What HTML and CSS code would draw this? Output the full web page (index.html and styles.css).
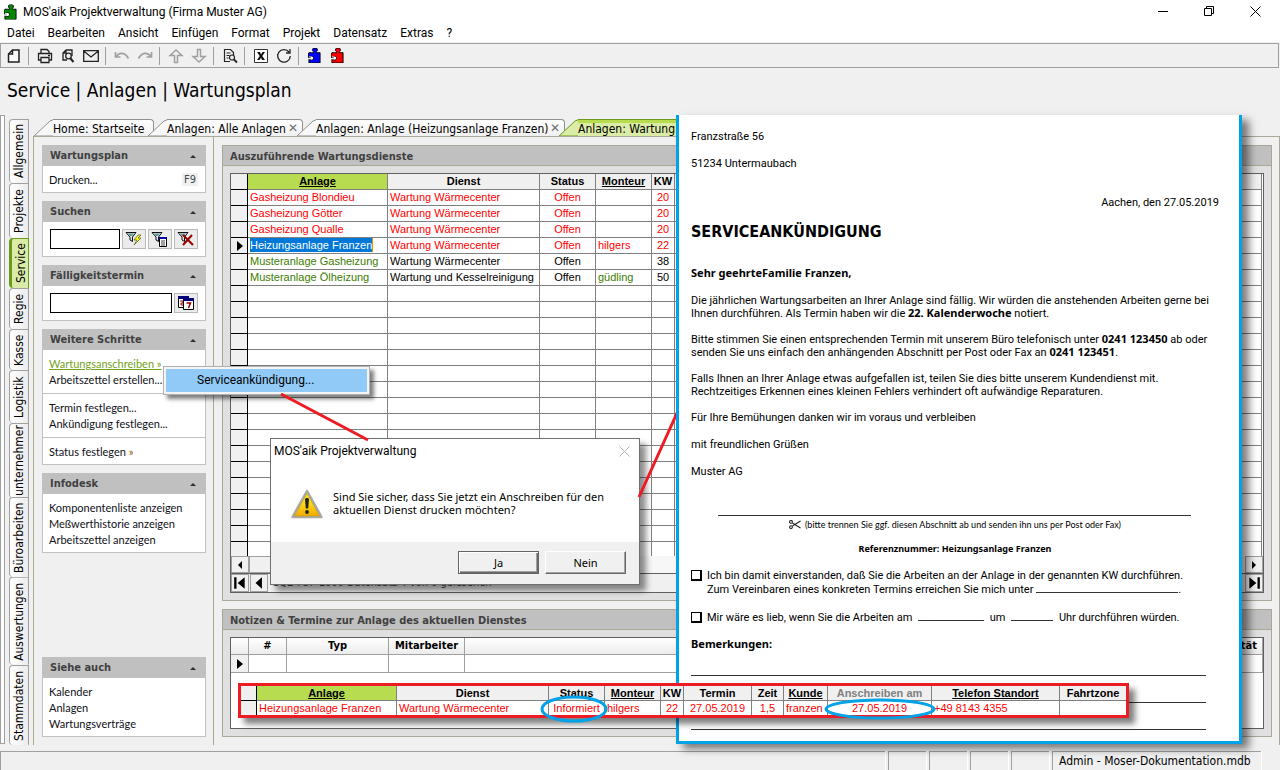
FILE: index.html
```html
<!DOCTYPE html>
<html lang="de">
<head>
<meta charset="utf-8">
<title>MOS'aik Projektverwaltung (Firma Muster AG)</title>
<link rel="stylesheet" href="styles.css">
</head>
<body>
<svg class="defs" aria-hidden="true">
  <symbol id="puzzle" viewBox="0 0 14 16">
    <path d="M4 5h2V4L5 3V1l1-1h3l1 1v2L9 4v1h4v11H1v-4h2v1h2v-1l1-1v-1L5 9H3v1H0V7l1-2z" stroke="#000" stroke-width="1" stroke-linejoin="round"/>
    <path d="M1 9h3l1 1v2H1v-1h2v-1H1z" fill="#fff"/>
  </symbol>
  <symbol id="funnel" viewBox="0 0 18 16">
    <path d="M1 1.500h10L7.500 6v4.500L5 9V6z" fill="#dfe9e9" stroke="#111"/>
    <path d="M3 2.500h6L7 5H5z" fill="#5b9b9b"/>
  </symbol>
</svg>
<div class="app">
  <header class="titlebar">
    <svg class="logo" viewBox="0 0 14 16" fill="#008a00"><use href="#puzzle"/></svg>
    <span class="apptitle">MOS'aik Projektverwaltung (Firma Muster AG)</span>
    <div class="winbtns">
      <button aria-label="Minimieren"><svg viewBox="0 0 11 11"><path d="M0 5.500h10" stroke="#000"/></svg></button>
      <button aria-label="Wiederherstellen"><svg viewBox="0 0 11 11" fill="none" stroke="#000"><path d="M.5 2.500h7v7h-7zM2.500 2.500v-2h7v7h-2"/></svg></button>
      <button aria-label="Schließen"><svg viewBox="0 0 11 11"><path d="M.5.5l10 10M10.500.5l-10 10" stroke="#000"/></svg></button>
    </div>
  </header>
  <nav class="menubar">
    <button>Datei</button><button>Bearbeiten</button><button>Ansicht</button><button>Einfügen</button><button>Format</button><button>Projekt</button><button>Datensatz</button><button>Extras</button><button>?</button>
  </nav>
  <div class="toolbar">
    <button aria-label="Neu"><svg viewBox="0 0 16 16" fill="none" stroke="#222" stroke-width="1.500"><path d="M6.500 2H13v12H2.500V6z" fill="#fff"/><path d="M2.500 6h4V2"/></svg></button>
    <i class="sep"></i>
    <button aria-label="Drucken"><svg viewBox="0 0 16 16" fill="none" stroke="#222" stroke-width="1.300"><path d="M4 5V1.500h6l2 2V5M4 12H1.500V5.500h13V12H12M4 9.500h8v5H4z"/><path d="M11 7.500h2"/></svg></button>
    <button aria-label="Vorschau"><svg viewBox="0 0 16 16" fill="none" stroke="#222" stroke-width="1.300"><path d="M6 2h6v6M6 2L3 5v7h4M6 2v3H3"/><circle cx="8.500" cy="8" r="2.800"/><path d="M10.500 10.500l3 3.500" stroke-width="2"/></svg></button>
    <button aria-label="E-Mail"><svg viewBox="0 0 16 16" fill="none" stroke="#222" stroke-width="1.300"><path d="M.7 2.700h14.600v10.600H.7zM.7 3l7.300 6 7.300-6"/></svg></button>
    <i class="sep"></i>
    <button aria-label="Rückgängig" disabled><svg viewBox="0 0 16 16" fill="none" stroke="#a0a0a0" stroke-width="1.700"><path d="M1.500 4v5h5M2 9c3-5 9-5 12.500 1.500"/></svg></button>
    <button aria-label="Wiederholen" disabled><svg viewBox="0 0 16 16" fill="none" stroke="#a0a0a0" stroke-width="1.700"><path d="M14.500 4v5h-5M14 9C11 4 5 4 1.500 10.500"/></svg></button>
    <i class="sep"></i>
    <button aria-label="Nach oben" disabled><svg viewBox="0 0 16 16" fill="none" stroke="#a0a0a0" stroke-width="1.500"><path d="M8 2L2 7.500h4.500V14.500h3V7.500H14z"/></svg></button>
    <button aria-label="Nach unten" disabled><svg viewBox="0 0 16 16" fill="none" stroke="#a0a0a0" stroke-width="1.500"><path d="M8 14L2 8.500h4.500V1.500h3v7H14z"/></svg></button>
    <i class="sep"></i>
    <button aria-label="Suchen"><svg viewBox="0 0 16 16" fill="none" stroke="#222" stroke-width="1.200"><path d="M8 13.500H2.500v-12h6l3 3V7M4.500 5h4M4.500 7.500h3M4.500 10h2"/><circle cx="10" cy="9.500" r="2.500"/><path d="M12 11.500l3 3" stroke-width="1.800"/></svg></button>
    <i class="sep"></i>
    <button aria-label="Excel"><svg viewBox="0 0 16 16"><path d="M1.500 1.500h13v13h-13z" fill="#fff" stroke="#333"/><path d="M4 4h3l1 2.500L9.500 4H12L9.300 8l2.700 4H9L8 9.800 6.500 12H4l2.700-4z" fill="#111"/></svg></button>
    <button aria-label="Aktualisieren"><svg viewBox="0 0 16 16" fill="none" stroke="#222" stroke-width="1.300"><path d="M13 4A6.300 6.300 0 1 0 14.300 8M14 1v4h-4"/></svg></button>
    <i class="sep"></i>
    <button aria-label="Modul blau"><svg class="piece" viewBox="0 0 14 16" fill="#0000ff"><use href="#puzzle"/></svg></button>
    <button aria-label="Modul rot"><svg class="piece" viewBox="0 0 14 16" fill="#ff0000"><use href="#puzzle"/></svg></button>
  </div>
  <h1 class="crumb">Service | Anlagen | Wartungsplan</h1>

  <main class="main">
    <div class="splitter"></div>
    <nav class="vtabs">
      <button class="v64">Allgemein</button><button class="v55">Projekte</button><button class="v50 on">Service</button><button class="v41">Regie</button><button class="v41">Kasse</button><button class="v53">Logistik</button><button class="v74">unternehmer</button><button class="v80">Büroarbeiten</button><button class="v88">Auswertungen</button><button class="v80">Stammdaten</button>
    </nav>
    <div class="content">
      <div class="tabs">
        <button class="tab home"><svg viewBox="0 0 19 17"><path d="M0 17L16 2l4-1.500V17z"/></svg><span>Home: Startseite</span></button>
        <button class="tab alle"><svg viewBox="0 0 19 17"><path d="M0 17L16 2l4-1.500V17z"/></svg><span>Anlagen: Alle Anlagen<b class="x">✕</b></span></button>
        <button class="tab one"><svg viewBox="0 0 19 17"><path d="M0 17L16 2l4-1.500V17z"/></svg><span>Anlagen: Anlage (Heizungsanlage Franzen)<b class="x">✕</b></span></button>
        <button class="tab plan on"><svg viewBox="0 0 19 17"><path d="M0 17L16 2l4-1.500V17z"/></svg><span>Anlagen: Wartung</span></button>
      </div>
      <div class="frame">
        <aside class="side">
          <section class="box"><h2>Wartungsplan<i class="up"></i></h2>
            <div class="links"><a href="#">Drucken...</a><kbd>F9</kbd></div></section>
          <section class="box"><h2>Suchen<i class="up"></i></h2>
            <div class="search"><input type="text" aria-label="Suchen">
              <button aria-label="Filtern"><svg viewBox="0 0 18 16"><use href="#funnel"/><path d="M13 4l-4 5h3l-3 5 7-7h-3l3-3z" fill="#ff0" stroke="#553" stroke-width=".7"/></svg></button>
              <button aria-label="Filterliste"><svg viewBox="0 0 18 16"><use href="#funnel"/><path d="M8.500 6.500h7v9h-7z" fill="#fff" stroke="#000"/><path d="M8 6h8v2H8z" fill="#00a"/><path d="M10 10h4M10 12h4M10 14h4" stroke="#444"/></svg></button>
              <button aria-label="Filter löschen"><svg viewBox="0 0 18 16"><use href="#funnel"/><path d="M6 4l10 10M15 4L6 14" stroke="#900" stroke-width="2"/></svg></button>
            </div></section>
          <section class="box"><h2>Fälligkeitstermin<i class="up"></i></h2>
            <div class="search"><input type="text" aria-label="Fälligkeitstermin">
              <button aria-label="Kalender"><svg viewBox="0 0 18 16"><path d="M1.500 1.500h10v11h-10z" fill="#fff" stroke="#000"/><path d="M1 1h11v3H1z" fill="#00007b"/><path d="M3 6h3v2H4v2h2" fill="none" stroke="#900"/><path d="M6.500 3.500h10v11h-10z" fill="#fff" stroke="#000"/><path d="M6 3h11v3H6z" fill="#00007b"/><path d="M9.500 8h4l-2 5" fill="none" stroke="#900" stroke-width="1.500"/></svg></button>
            </div></section>
          <section class="box"><h2>Weitere Schritte<i class="up"></i></h2>
            <div class="links"><a href="#" class="hot">Wartungsanschreiben »</a><a href="#">Arbeitszettel erstellen...</a></div>
            <div class="links"><a href="#">Termin festlegen...</a><a href="#">Ankündigung festlegen...</a></div>
            <div class="links"><a href="#">Status festlegen <span class="arr">»</span></a></div></section>
          <section class="box"><h2>Infodesk<i class="up"></i></h2>
            <div class="links"><a href="#">Komponentenliste anzeigen</a><a href="#">Meßwerthistorie anzeigen</a><a href="#">Arbeitszettel anzeigen</a></div></section>
          <section class="box last"><h2>Siehe auch<i class="up"></i></h2>
            <div class="links"><a href="#">Kalender</a><a href="#">Anlagen</a><a href="#">Wartungsverträge</a></div></section>
        </aside>
        <div class="work">
          <section class="panel grow">
            <h2>Auszuführende Wartungsdienste</h2>
            <div class="gridbox">
              <div class="gridview">
                <table class="grid services">
                  <colgroup><col class="c17"><col class="c140"><col class="c152"><col class="c56"><col class="c56"><col class="c23"><col></colgroup>
                  <thead><tr><th></th><th class="key"><u>Anlage</u></th><th>Dienst</th><th>Status</th><th><u>Monteur</u></th><th>KW</th><th></th></tr></thead>
                  <tbody id="services">
                    <tr class="red"><td></td><td>Gasheizung Blondieu</td><td>Wartung Wärmecenter</td><td class="mid">Offen</td><td></td><td class="mid">20</td><td></td></tr>
                    <tr class="red"><td></td><td>Gasheizung Götter</td><td>Wartung Wärmecenter</td><td class="mid">Offen</td><td></td><td class="mid">20</td><td></td></tr>
                    <tr class="red"><td></td><td>Gasheizung Qualle</td><td>Wartung Wärmecenter</td><td class="mid">Offen</td><td></td><td class="mid">20</td><td></td></tr>
                    <tr class="red"><td><i class="cur"></i></td><td><mark>Heizungsanlage Franzen</mark></td><td>Wartung Wärmecenter</td><td class="mid">Offen</td><td>hilgers</td><td class="mid">22</td><td></td></tr>
                    <tr><td></td><td class="green">Musteranlage Gasheizung</td><td>Wartung Wärmecenter</td><td class="mid">Offen</td><td></td><td class="mid">38</td><td></td></tr>
                    <tr><td></td><td class="green">Musteranlage Ölheizung</td><td>Wartung und Kesselreinigung</td><td class="mid">Offen</td><td class="green">güdling</td><td class="mid">50</td><td></td></tr>
                  </tbody>
                </table>
              </div>
              <div class="hscroll"><button aria-label="Links"><i class="tri l"></i></button><div class="thumb"></div><div class="track"></div><button aria-label="Rechts"><i class="tri r"></i></button></div>
              <div class="recnav">
                <button aria-label="Erster"><svg viewBox="0 0 12 12"><path d="M1 1h2v10H1zM10 1v10L4 6z"/></svg></button>
                <button aria-label="Vorheriger"><svg viewBox="0 0 12 12"><path d="M8.500 1v10L3 6z"/></svg></button>
                <span>SQL TOP 1000 Datensatz 4 von 6 gelesehen</span>
                <button aria-label="Letzter"><svg viewBox="0 0 12 12"><path d="M9 1h2v10H9zM2 1v10l6-5z"/></svg></button>
              </div>
            </div>
          </section>
          <section class="panel">
            <h2>Notizen &amp; Termine zur Anlage des aktuellen Dienstes</h2>
            <div class="gridbox notesbox">
              <table class="grid notes">
                <colgroup><col class="c18"><col class="c38"><col class="c102"><col class="c76"><col></colgroup>
                <thead><tr><th></th><th>#</th><th>Typ</th><th>Mitarbeiter</th><th class="end">Priorität</th></tr></thead>
                <tbody><tr><td><i class="cur"></i></td><td></td><td></td><td></td><td></td></tr></tbody>
              </table>
            </div>
          </section>
        </div>
      </div>
    </div>
  </main>
  <footer class="status"><span class="wide"></span><span></span><span></span><span></span><span></span><span class="db">Admin - Moser-Dokumentation.mdb</span></footer>

  <div class="popup"><button>Serviceankündigung...</button></div>

  <div class="dialog" role="dialog" aria-label="MOS'aik Projektverwaltung">
    <div class="dhead"><span>MOS'aik Projektverwaltung</span><button aria-label="Schließen"><svg viewBox="0 0 11 11"><path d="M.5.5l10 10M10.500.5l-10 10" stroke="#b4b4b4"/></svg></button></div>
    <div class="dbody">
      <svg viewBox="0 0 32 30"><defs><linearGradient id="warn" x1="0" y1="0" x2="0" y2="1"><stop offset="0" stop-color="#f6ea1c"/><stop offset=".5" stop-color="#f9d714"/><stop offset="1" stop-color="#f2a900"/></linearGradient></defs>
        <path d="M16 2L30.500 28h-29z" fill="#ddd" stroke="#a8a8a8" stroke-width="2.500" stroke-linejoin="round"/>
        <path d="M16 4.500L28.500 27h-25z" fill="url(#warn)" stroke="#c99a00" stroke-width=".6"/>
        <path d="M14 10.500c0-2 4-2 4 0l-.8 9h-2.400z" fill="#222"/><circle cx="16" cy="23" r="1.900" fill="#222"/></svg>
      <p>Sind Sie sicher, dass Sie jetzt ein Anschreiben für den<br>aktuellen Dienst drucken möchten?</p>
    </div>
    <div class="dfoot"><button class="def">Ja</button><button>Nein</button></div>
  </div>

  <svg class="ink" viewBox="0 0 1280 770"><path d="M281 394L368 440M639 497L677 413" stroke="#ed1c24" stroke-width="3" fill="none"/></svg>

  <article class="letter">
    <p>Franzstraße 56</p>
    <p class="city">51234 Untermaubach</p>
    <p class="date">Aachen, den 27.05.2019</p>
    <h3>SERVICEANKÜNDIGUNG</h3>
    <p class="dear"><b>Sehr geehrteFamilie Franzen,</b></p>
    <p class="para first">Die jährlichen Wartungsarbeiten an Ihrer Anlage sind fällig. Wir würden die anstehenden Arbeiten gerne bei<br>Ihnen durchführen. Als Termin haben wir die <b>22. Kalenderwoche</b> notiert.</p>
    <p class="para">Bitte stimmen Sie einen entsprechenden Termin mit unserem Büro telefonisch unter <b>0241 123450</b> ab oder<br>senden Sie uns einfach den anhängenden Abschnitt per Post oder Fax an <b>0241 123451</b>.</p>
    <p class="para">Falls Ihnen an Ihrer Anlage etwas aufgefallen ist, teilen Sie dies bitte unserem Kundendienst mit.<br>Rechtzeitiges Erkennen eines kleinen Fehlers verhindert oft aufwändige Reparaturen.</p>
    <p class="para">Für Ihre Bemühungen danken wir im voraus und verbleiben</p>
    <p class="para greet">mit freundlichen Grüßen</p>
    <p class="para greet">Muster AG</p>
    <div class="cut"></div>
    <p class="note"><svg viewBox="0 0 12 9" fill="none" stroke="#222" stroke-width="1.100"><path d="M11.500 1L3.500 6M11.500 8L3.500 3"/><circle cx="2" cy="1.900" r="1.400"/><circle cx="2" cy="7.100" r="1.400"/></svg>(bitte trennen Sie ggf. diesen Abschnitt ab und senden ihn uns per Post oder Fax)</p>
    <p class="ref">Referenznummer: Heizungsanlage Franzen</p>
    <div class="opt"><input type="checkbox" id="ok"><label for="ok">Ich bin damit einverstanden, daß Sie die Arbeiten an der Anlage in der genannten KW durchführen.<br>Zum Vereinbaren eines konkreten Termins erreichen Sie mich unter <i class="blank b142"></i>.</label></div>
    <div class="opt"><input type="checkbox" id="alt"><label for="alt">Mir wäre es lieb, wenn Sie die Arbeiten am <i class="blank b66"></i> um <i class="blank b42"></i> Uhr durchführen würden.</label></div>
    <p class="para"><b>Bemerkungen:</b></p>
    <div class="rule"></div><div class="rule"></div><div class="rule"></div>
  </article>

  <div class="strip">
    <table class="grid">
      <colgroup><col class="c16"><col class="c140"><col class="c152"><col class="c56"><col class="c56"><col class="c23"><col class="c68"><col class="c32"><col class="c44"><col class="c104"><col class="c128"><col class="c66"></colgroup>
      <thead><tr><th></th><th class="key"><u>Anlage</u></th><th>Dienst</th><th>Status</th><th><u>Monteur</u></th><th>KW</th><th>Termin</th><th>Zeit</th><th><u>Kunde</u></th><th class="dim">Anschreiben am</th><th><u>Telefon Standort</u></th><th>Fahrtzone</th></tr></thead>
      <tbody><tr class="red"><td></td><td>Heizungsanlage Franzen</td><td>Wartung Wärmecenter</td><td class="mid">Informiert</td><td>hilgers</td><td class="mid">22</td><td class="mid">27.05.2019</td><td class="mid">1,5</td><td>franzen</td><td class="mid">27.05.2019</td><td>+49 8143 4355</td><td></td></tr></tbody>
    </table>
  </div>
  <svg class="ink" viewBox="0 0 1280 770"><g fill="none" stroke="#00a2e8" stroke-width="3"><ellipse cx="574" cy="709" rx="32" ry="12"/><ellipse cx="880" cy="709" rx="54" ry="9"/></g></svg>
</div>
<script src="rows.js"></script>
</body>
</html>
```
FILE: rows.js
```js
const body = document.getElementById("services");
for (let i = 0; i < 17; i++) {
  const row = body.insertRow();
  for (let c = 0; c < 7; c++) row.insertCell();
}
```
FILE: styles.css
```css
* { box-sizing: border-box; }
:root {
  --bg: #f0f0f0;
  --line: #a0a0a0;
  --olive: #aaa797;
  --tahoma: "DejaVu Sans Condensed", "DejaVu Sans", sans-serif;
}
body { margin: 0; font: 12px/16px Roboto, sans-serif; color: #000; background: var(--bg); }
button { font: inherit; color: inherit; border: 0; background: none; padding: 0; }
h1, h2, h3, p { margin: 0; }
i { font-style: normal; }
.defs { position: absolute; width: 0; height: 0; }
.app { position: relative; display: flex; flex-direction: column; height: 100vh; overflow: hidden; }

.titlebar { display: flex; align-items: center; height: 23px; padding-left: 4px; background: #fff; }
.logo { width: 13px; height: 16px; margin-right: 6px; }
.winbtns { margin-left: auto; display: flex; padding-right: 2px; }
.winbtns button { width: 46px; height: 20px; }
.winbtns svg { width: 11px; height: 11px; display: block; margin: auto; }
.menubar { display: flex; gap: 13px; height: 19px; padding: 1px 0 0 7px; background: #fff; align-items: center; }
.toolbar { display: flex; align-items: center; height: 25px; margin: 1px 1px 0 0; padding-left: 1px; border: 1px solid var(--line); }
.toolbar button { width: 23px; height: 22px; }
.toolbar svg { width: 16px; height: 16px; display: block; margin: auto; }
.toolbar svg.piece { width: 13px; height: 15px; }
.sep { width: 1px; height: 18px; margin: 0 4px 0 3px; background: var(--line); }
.crumb { font: 400 19px/44px var(--tahoma); height: 47px; padding-left: 7px; }

.main { flex: 1; min-height: 0; display: flex; padding-bottom: 6px; margin-bottom: 19px; }
.main, .content, .work { min-width: 0; }
.splitter { width: 5px; margin-bottom: 1px; border: 1px solid var(--line); background: #fff; }
.vtabs { display: flex; flex-direction: column; width: 20px; margin: 4px 0 0 4px; font: 12px/18px var(--tahoma); }
.vtabs button { writing-mode: vertical-rl; transform: rotate(180deg); width: 20px; border: 1px solid var(--line); border-top: 0; border-radius: 0 4px 4px 0; background: linear-gradient(90deg, #ececec, #fff); overflow: hidden; white-space: nowrap; padding: 2px 0; text-align: center; }
.vtabs .on { background: #dbeca6; border-color: #6b9a1c; border-right-width: 3px; }
.v41 { height: 41px; } .v50 { height: 50px; } .v53 { height: 53px; } .v55 { height: 55px; } .v64 { height: 64px; }
.v74 { height: 75px; } .v80 { height: 80px; } .v88 { height: 88px; }
.vtabs .v74 { padding: 0; }

.content { flex: 1; display: flex; flex-direction: column; margin-left: 4px; padding-top: 4px; }
.tabs { display: flex; height: 17px; padding-left: 1px; }
.tab { display: flex; height: 17px; margin-right: -6px; font: 12px/18px var(--tahoma); white-space: nowrap; }
.tab svg { width: 19px; height: 17px; flex: none; fill: #f8f8f8; stroke: #909090; overflow: hidden; }
.tab span { flex: 1; display: flex; justify-content: space-between; text-align: left; border: 1px solid #909090; border-width: 1px 1px 0 0; border-radius: 0 4px 0 0; background: linear-gradient(#fff, #f0f0f0); padding-right: 4px; }
.home { width: 120px; } .alle { width: 155px; } .one { width: 268px; } .plan { width: 180px; }
.tab .x { font: 700 12px/17px "DejaVu Sans", sans-serif; color: #707070; }
.tab.on span { background: linear-gradient(#b8dc50 3px, #dbeca6 3px); border-color: #6b9a1c; }
.tab.on svg { fill: #dbeca6; stroke: #6b9a1c; }
.frame { flex: 1; min-height: 0; display: flex; border: 1px solid var(--olive); border-bottom: 0; }

.side { width: 180px; flex: none; display: flex; flex-direction: column; gap: 8px; padding: 8px 7px 8px 8px; border-right: 1px solid var(--olive); }
.box { background: #fff; border: 1px solid #c0c0c0; border-top: 0; }
.box.last { margin-top: auto; }
.box h2 { display: flex; justify-content: space-between; align-items: center; height: 21px; margin: 0 -1px; padding: 1px 10px 0 8px; background: #c0c0c0; color: #404040; font: 700 11px/20px var(--tahoma); }
.up { width: 0; border: 3px solid transparent; border-top: 0; border-bottom-color: #303030; }
.links { position: relative; display: flex; flex-direction: column; align-items: flex-start; padding: 6px 6px 4px; font: 11px/16px Lato, sans-serif; }
.links + .links { border-top: 1px solid #c0c0c0; margin-top: 1px; }
.links a { color: #101018; text-decoration: none; white-space: nowrap; }
.links a.hot { color: #74a21b; text-decoration: underline; }
.arr { color: #8a5a00; }
kbd { position: absolute; right: 7px; top: 7px; padding: 0 2px; background: var(--bg); color: #3c4c50; font: 11px/13px var(--tahoma); }
.search { display: flex; gap: 2px; padding: 7px; }
.search input { flex: 1; min-width: 0; height: 20px; border: 1px solid #000; background: #fff; }
.search button { width: 24px; height: 20px; background: #ececec; border: 1px solid #b8b8b8; }
.search svg { width: 18px; height: 16px; display: block; margin: auto; }

.work { flex: 1; display: flex; flex-direction: column; gap: 8px; padding: 8px 7px 8px 8px; }
.panel { display: flex; flex-direction: column; min-height: 0; border: 1px solid var(--olive); background: #e0e0e0; }
.panel.grow { flex: 1; }
.panel h2 { height: 20px; flex: none; padding: 1px 0 0 7px; background: #c0c0c0; border-bottom: 1px solid var(--olive); font: 700 11px/19px var(--tahoma); color: #404040; }
.gridbox { flex: 1; min-height: 0; margin: 7px; display: flex; flex-direction: column; border: 1px solid #606060; background: #fff; }
.gridview { flex: 1; min-height: 0; overflow: hidden; padding-right: 1px; }
.notesbox { flex: none; height: 92px; }
.grid { width: 100%; table-layout: fixed; border-collapse: separate; border-spacing: 0; font: 11px/15px "Liberation Sans", Arial, sans-serif; }
.grid th, .grid td { height: 16px; padding: 0 2px; border: solid #808080; border-width: 0 1px 1px 0; overflow: hidden; white-space: nowrap; line-height: 15px; }
.grid td { text-align: left; background: #fff; }
.grid th { font-weight: 700; background: var(--bg); padding: 0; }
.grid th.key { background: #b8dc50; }
.grid th.dim { color: #808080; }
.grid tr > :first-child { background: var(--bg); border-color: #000; }
.grid td.mid { text-align: center; padding: 0; }
.red { color: #ff0000; }
.green { color: #3c7d00; }
mark { background: #0078d7; color: #fff; display: inline-block; height: 14px; line-height: 14px; border-right: 1px solid #f80; }
.cur { display: block; width: 0; margin-left: 4px; border: 5px solid transparent; border-left: 6px solid #000; border-right: 0; }
.grid.notes th { font: 700 11px/16px var(--tahoma); height: 17px; background: linear-gradient(#fff, #ececec); }
.grid.notes th.end { text-align: right; padding-right: 5px; }
.grid.notes td { height: 18px; }
.grid.notes th, .grid.notes td { border-color: var(--line); }
.c16 { width: 16px; } .c17 { width: 17px; } .c18 { width: 18px; } .c23 { width: 23px; } .c32 { width: 32px; } .c38 { width: 38px; } .c44 { width: 44px; }
.c56 { width: 56px; } .c66 { width: 66px; } .c68 { width: 68px; } .c76 { width: 76px; } .c102 { width: 102px; }
.c104 { width: 104px; } .c128 { width: 128px; } .c140 { width: 140px; } .c152 { width: 152px; }

.hscroll { display: flex; height: 18px; background: var(--bg); border-bottom: 1px solid #606060; }
.hscroll button { width: 18px; height: 17px; border: 1px solid #a0a0a0; background: var(--bg); }
.thumb { flex: 3; border: 1px solid #a0a0a0; }
.track { flex: 7; background: #f7f7f7; }
.tri { display: block; width: 0; margin: auto; border: 4px solid transparent; }
.tri.l { border-right-color: #000; border-left: 0; }
.tri.r { border-left-color: #000; border-right: 0; }
.recnav { display: flex; gap: 1px; align-items: center; height: 18px; background: var(--bg); }
.recnav button { width: 18px; height: 18px; border: 1px solid #a0a0a0; }
.recnav svg { width: 14px; height: 14px; display: block; margin: auto; }
.recnav span { flex: 1; padding-left: 4px; font: 11px/20px var(--tahoma); color: #404040; }

.status { position: absolute; left: 0; right: 0; bottom: 0; display: flex; gap: 3px; height: 19px; padding-right: 19px; font: 12px/18px var(--tahoma); }
.status span { width: 38px; border: solid var(--line); border-width: 1px 0 0 1px; box-shadow: 1px 0 #fff; }
.status .wide { flex: 1; }
.status .db { width: auto; min-width: 209px; padding: 0 7px 0 6px; }

.popup { position: absolute; left: 163px; top: 366px; width: 207px; padding: 2px; background: #f4f4f4; border: 1px solid #b0b0b0; box-shadow: 4px 4px 4px rgba(0, 0, 0, .5); }
.popup button { width: 100%; height: 23px; padding-left: 31px; background: #91c9f7; text-align: left; font: 12px/23px Roboto, sans-serif; }

.dialog { position: absolute; left: 270px; top: 438px; width: 370px; border: 1px solid #707070; background: #fff; box-shadow: 6px 6px 6px rgba(0, 0, 0, .45); }
.dhead { display: flex; justify-content: space-between; align-items: center; height: 24px; padding: 0 9px 0 3px; }
.dhead svg { width: 11px; height: 11px; display: block; }
.dbody { display: flex; gap: 10px; height: 79px; padding: 26px 0 0 20px; }
.dbody svg { width: 32px; height: 30px; }
.dbody p { font: 11px/13px "Noto Sans", sans-serif; padding-top: 1px; }
.dfoot { display: flex; justify-content: flex-end; gap: 6px; height: 42px; padding: 9px 13px; background: var(--bg); }
.dfoot button { width: 81px; height: 23px; font: 11px/19px "Noto Sans", sans-serif; border: 1px solid; border-color: #fff #696969 #696969 #fff; box-shadow: inset -1px -1px #a0a0a0; }
.dfoot .def { border-color: #646464; box-shadow: inset 1px 1px #fff, inset -1px -1px #696969, inset -2px -2px #a0a0a0; }

.ink { position: absolute; left: 0; top: 0; width: 1280px; height: 770px; pointer-events: none; }

.letter { position: absolute; left: 676px; top: 115px; width: 566px; padding: 15px 20px 11px 12px; background: #fff; border: 3px solid #00a2e8; border-top: 0; box-shadow: 7px 5px 8px rgba(0, 0, 0, .5); font: 11px/13px Roboto, sans-serif; }
.letter b { font: 700 11px/13px "Noto Sans", sans-serif; line-height: 1; }
.city { margin-top: 14px; }
.date { margin-top: 26px; text-align: right; }
.letter h3 { margin-top: 13px; font: 700 16px/20px var(--tahoma); }
.dear { margin-top: 25px; }
.para { margin-top: 13px; white-space: nowrap; }
.first, .greet { margin-top: 14px; }
.cut { margin: 37px 28px 0 27px; border-top: 1px solid #333; }
.note { margin-top: 2px; display: flex; justify-content: center; align-items: center; gap: 4px; font: 9px/13px Lato, sans-serif; }
.note svg { width: 12px; height: 9px; }
.ref { margin-top: 11px; font: 700 9px/13px "Noto Sans", sans-serif; text-align: center; }
.opt { display: flex; gap: 5px; margin-top: 14px; line-height: 14px; white-space: nowrap; }
.opt input { appearance: none; flex: none; width: 11px; height: 11px; margin: 1px 0 0; border: 2px solid #000; border-width: 1px 2px 2px 1px; }
.blank { display: inline-block; border-bottom: 1px solid #333; margin: 0 3px; }
.b142 { width: 142px; margin: 0; } .b66 { width: 66px; } .b42 { width: 42px; }
.rule { height: 1px; margin: 24px 13px 0 0; background: #333; }
.rule + .rule { margin-top: 26px; }

.strip { position: absolute; left: 238px; top: 683px; width: 891px; border: 3px solid #ed1c24; background: #fff; box-shadow: 6px 6px 6px rgba(0, 0, 0, .5); }
.strip .grid th { height: 15px; line-height: 14px; }
.strip .grid td { border-bottom: 0; height: 14px; line-height: 14px; }
.strip tr > :last-child { border-right: 0; }
```
